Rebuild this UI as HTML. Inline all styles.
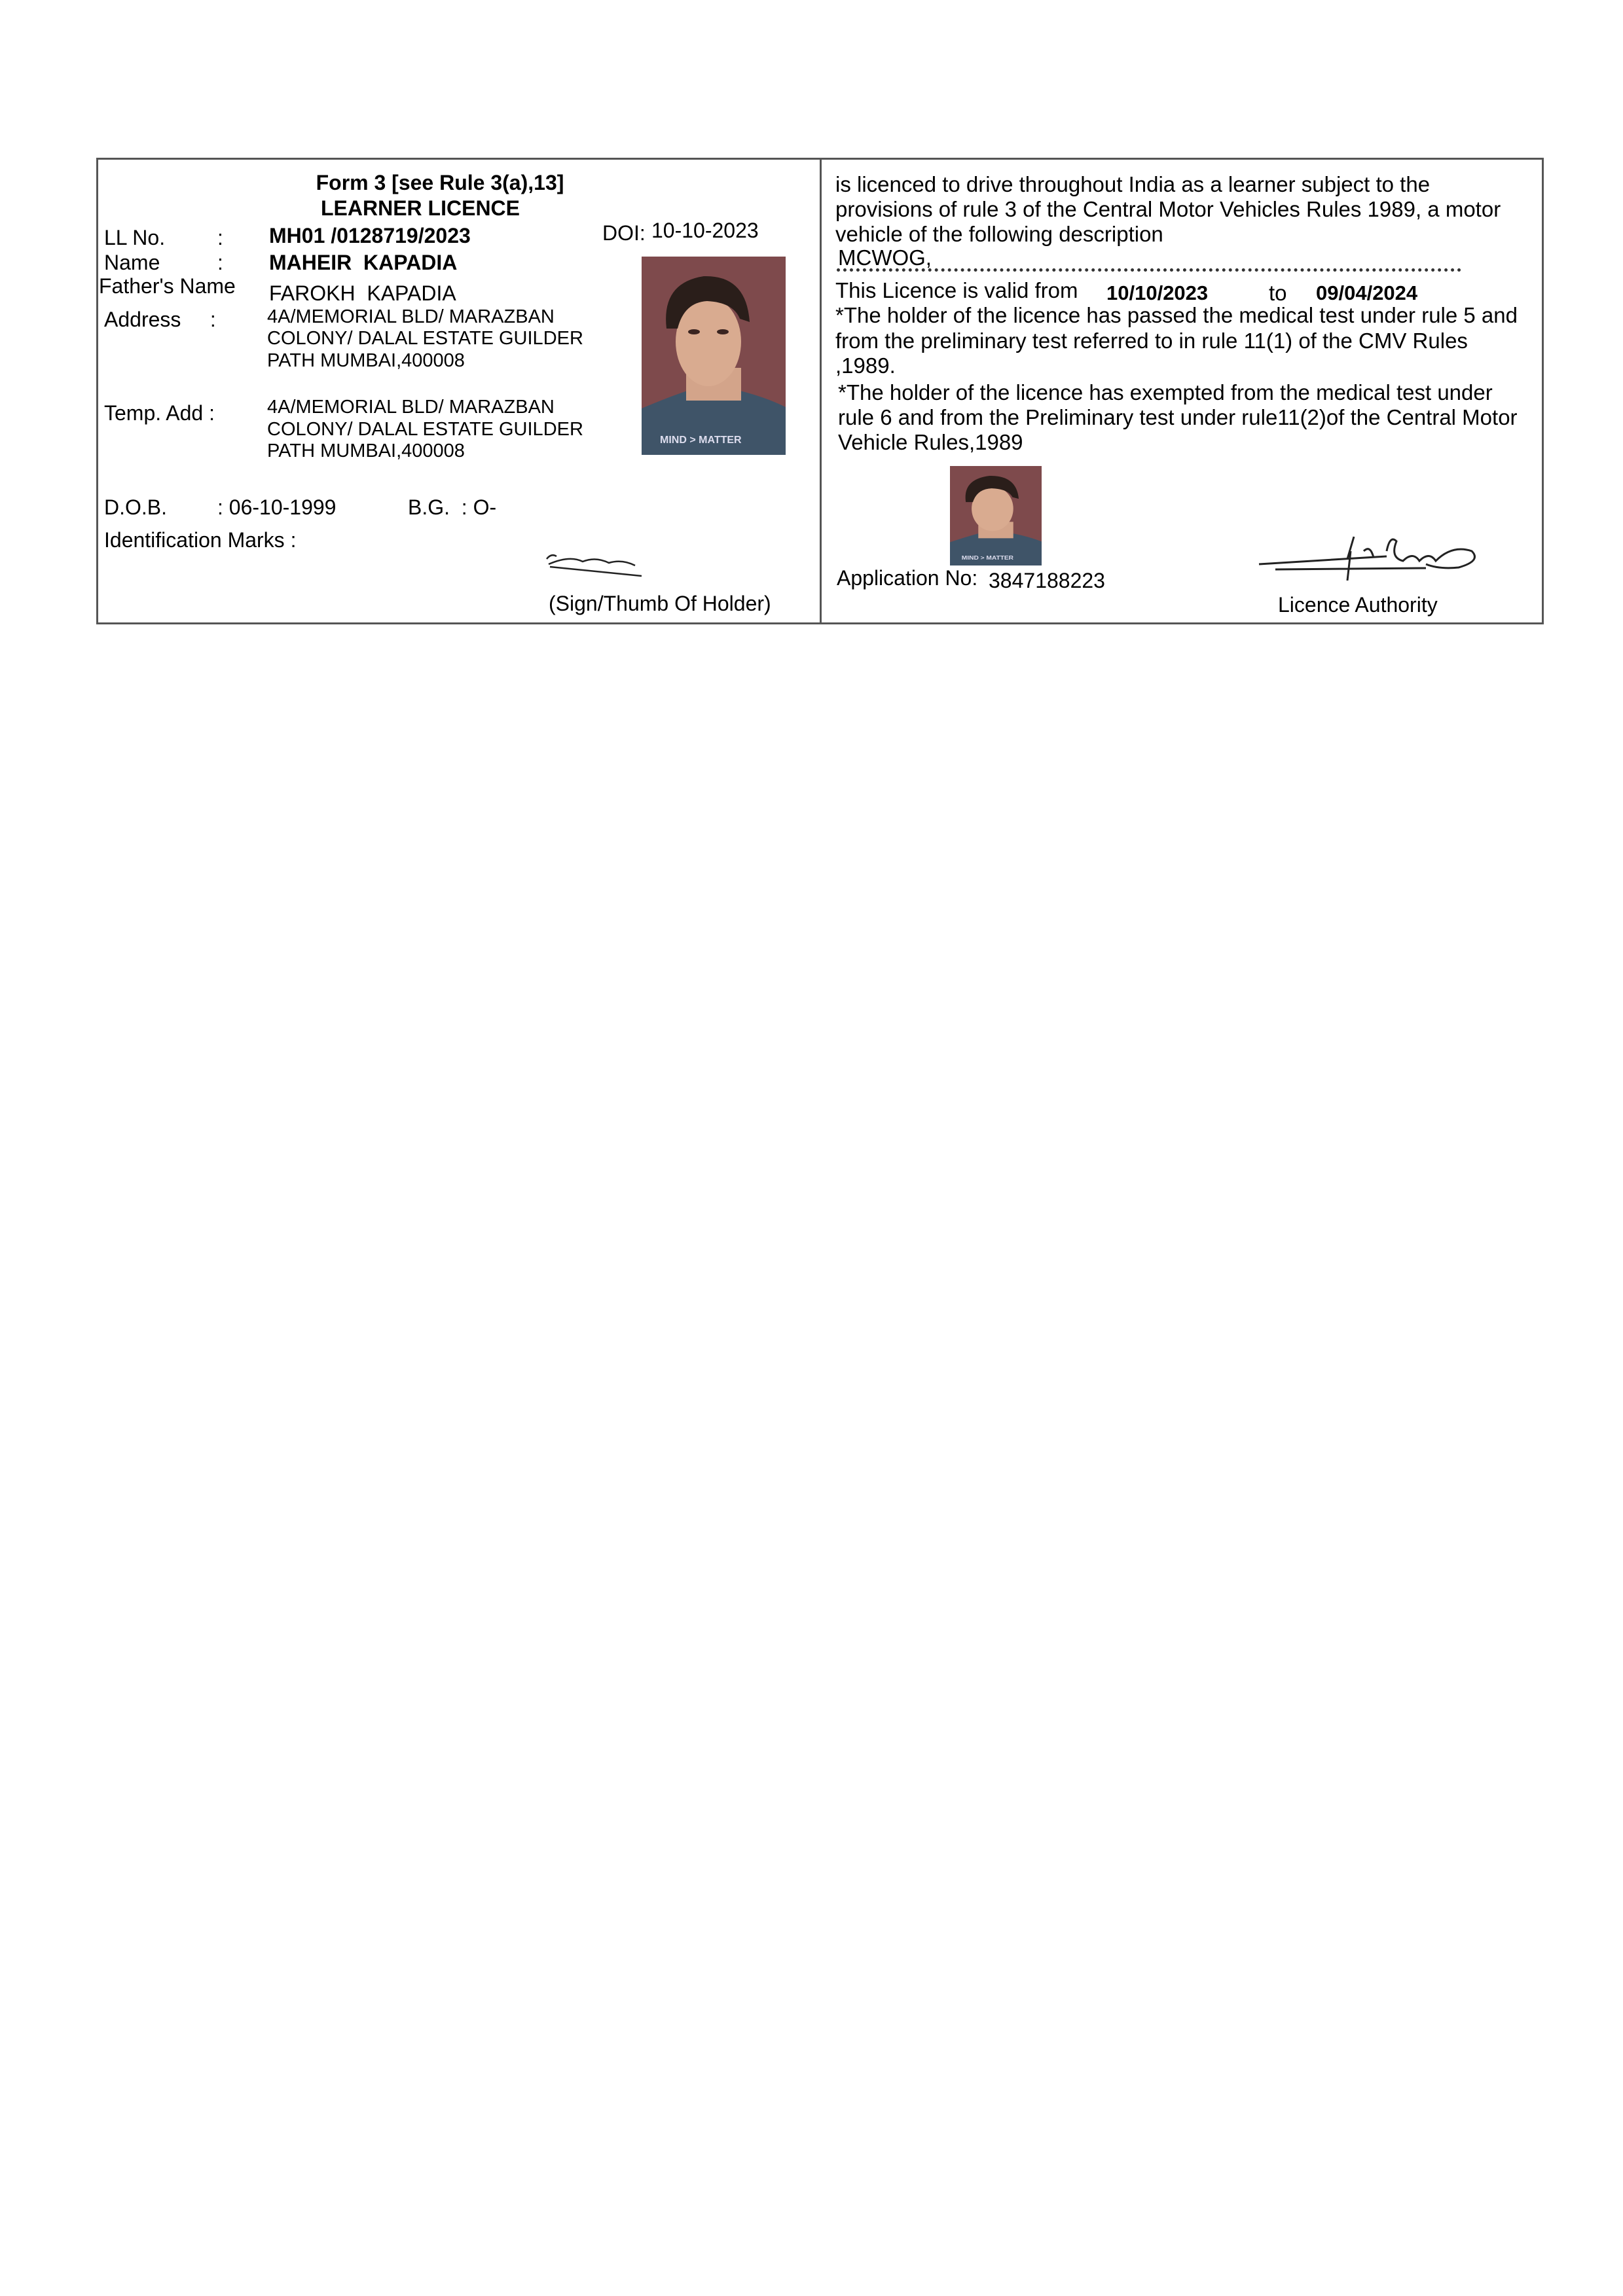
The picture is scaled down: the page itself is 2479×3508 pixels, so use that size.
<!DOCTYPE html>
<html><head><meta charset="utf-8"><style>
html,body{margin:0;padding:0;background:#fff;}
body{width:2479px;height:3508px;position:relative;overflow:hidden;font-family:"Liberation Sans",Arial,sans-serif;color:#000;}
.t{position:absolute;line-height:1;white-space:nowrap;font-size:32px;}
.r{font-size:33px;}
.b{font-weight:bold;}
.s{font-size:29px;}
</style></head><body>
<div style="position:absolute;left:147px;top:241px;width:2205px;height:707px;border:3px solid #555;"></div>
<div style="position:absolute;left:1252px;top:241px;width:3px;height:713px;background:#555;"></div>

<div class="t b" style="left:672px;top:263px;font-size:32px;transform:translateX(-50%)">Form 3 [see Rule 3(a),13]</div>
<div class="t b" style="left:642px;top:302px;font-size:32px;transform:translateX(-50%)">LEARNER LICENCE</div>

<div class="t" style="left:159px;top:347px">LL No.</div>
<div class="t" style="left:332px;top:347px">:</div>
<div class="t b" style="left:411px;top:344px;font-size:32px">MH01 /0128719/2023</div>
<div class="t" style="left:920px;top:340px">DOI:</div>
<div class="t" style="left:995px;top:336px">10-10-2023</div>

<div class="t" style="left:159px;top:385px">Name</div>
<div class="t" style="left:332px;top:385px">:</div>
<div class="t b" style="left:411px;top:385px;font-size:32px">MAHEIR&nbsp; KAPADIA</div>

<div class="t" style="left:151px;top:421px">Father's Name</div>
<div class="t" style="left:411px;top:432px">FAROKH&nbsp; KAPADIA</div>

<div class="t" style="left:159px;top:472px">Address&nbsp;&nbsp;&nbsp;&nbsp; :</div>
<div class="t s" style="left:408px;top:470px">4A/MEMORIAL BLD/ MARAZBAN</div>
<div class="t s" style="left:408px;top:503px">COLONY/ DALAL ESTATE GUILDER</div>
<div class="t s" style="left:408px;top:537px">PATH MUMBAI,400008</div>

<div class="t" style="left:159px;top:615px">Temp. Add :</div>
<div class="t s" style="left:408px;top:608px">4A/MEMORIAL BLD/ MARAZBAN</div>
<div class="t s" style="left:408px;top:642px">COLONY/ DALAL ESTATE GUILDER</div>
<div class="t s" style="left:408px;top:675px">PATH MUMBAI,400008</div>

<svg style="position:absolute;left:980px;top:392px" width="220" height="303" viewBox="0 0 220 303">
<rect width="220" height="303" fill="#7e4a4c"/>
<path d="M0 232 Q40 215 70 205 L150 205 Q190 215 220 230 L220 303 L0 303Z" fill="#3f5468"/>
<rect x="68" y="170" width="84" height="50" fill="#d3a48a"/>
<ellipse cx="102" cy="130" rx="50" ry="68" fill="#d9ab90"/>
<path d="M38 110 Q30 40 95 30 Q160 28 165 100 L150 95 Q140 70 100 68 Q65 70 55 110Z" fill="#2a1e1a"/>
<ellipse cx="80" cy="115" rx="9" ry="4" fill="#3a2420"/>
<ellipse cx="124" cy="115" rx="9" ry="4" fill="#3a2420"/>
<text x="28" y="285" font-family="Liberation Sans" font-size="16" fill="#dde" font-weight="bold">MIND &gt; MATTER</text>
</svg>

<div class="t" style="left:159px;top:759px">D.O.B.</div>
<div class="t" style="left:332px;top:759px">: 06-10-1999</div>
<div class="t" style="left:623px;top:759px">B.G.&nbsp; : O-</div>
<div class="t" style="left:159px;top:809px">Identification Marks :</div>

<svg style="position:absolute;left:830px;top:840px" width="175" height="45" viewBox="0 0 175 45">
<path d="M5 14 Q12 5 20 10 M8 22 Q40 8 60 18 Q80 10 100 20 Q120 14 140 24 M10 26 L150 40" stroke="#222" stroke-width="2.5" fill="none"/>
</svg>
<div class="t" style="left:838px;top:906px">(Sign/Thumb Of Holder)</div>

<div class="t r" style="left:1276px;top:265px">is licenced to drive throughout India as a learner subject to the</div>
<div class="t r" style="left:1276px;top:303px">provisions of rule 3 of the Central Motor Vehicles Rules 1989, a motor</div>
<div class="t r" style="left:1276px;top:341px">vehicle of the following description</div>
<div class="t r" style="left:1280px;top:377px">MCWOG,</div>
<div style="position:absolute;left:1278px;top:410px;width:954px;border-top:5px dotted #333;"></div>
<div class="t r" style="left:1276px;top:427px">This Licence is valid from</div>
<div class="t b" style="left:1690px;top:432px;font-size:31px">10/10/2023</div>
<div class="t r" style="left:1938px;top:431px">to</div>
<div class="t b" style="left:2010px;top:432px;font-size:31px">09/04/2024</div>
<div class="t r" style="left:1276px;top:465px">*The holder of the licence has passed the medical test under rule 5 and</div>
<div class="t r" style="left:1276px;top:504px">from the preliminary test referred to in rule 11(1) of the CMV Rules</div>
<div class="t r" style="left:1276px;top:542px">,1989.</div>
<div class="t r" style="left:1280px;top:583px">*The holder of the licence has exempted from the medical test under</div>
<div class="t r" style="left:1280px;top:621px">rule 6 and from the Preliminary test under rule11(2)of the Central Motor</div>
<div class="t r" style="left:1280px;top:659px">Vehicle Rules,1989</div>

<svg style="position:absolute;left:1451px;top:712px" width="140" height="152" viewBox="0 0 220 303" preserveAspectRatio="none">
<rect width="220" height="303" fill="#7e4a4c"/>
<path d="M0 232 Q40 215 70 205 L150 205 Q190 215 220 230 L220 303 L0 303Z" fill="#3f5468"/>
<rect x="68" y="170" width="84" height="50" fill="#d3a48a"/>
<ellipse cx="102" cy="130" rx="50" ry="68" fill="#d9ab90"/>
<path d="M38 110 Q30 40 95 30 Q160 28 165 100 L150 95 Q140 70 100 68 Q65 70 55 110Z" fill="#2a1e1a"/>
<text x="28" y="285" font-family="Liberation Sans" font-size="16" fill="#dde" font-weight="bold">MIND &gt; MATTER</text>
</svg>

<div class="t" style="left:1278px;top:867px">Application No:</div>
<div class="t" style="left:1510px;top:871px">3847188223</div>

<svg style="position:absolute;left:1918px;top:812px" width="370" height="75" viewBox="0 0 370 75">
<path d="M5 50 L200 38 M30 58 L260 56 M140 42 L150 8 M145 30 L140 75 M165 30 Q175 20 180 40 M200 30 Q205 5 215 15 Q205 40 225 45 Q240 30 250 45 Q265 30 275 45 Q300 20 330 30 Q345 45 310 55 Q280 58 260 50" stroke="#222" stroke-width="3" fill="none"/>
</svg>
<div class="t" style="left:1952px;top:908px">Licence Authority</div>
</body></html>
